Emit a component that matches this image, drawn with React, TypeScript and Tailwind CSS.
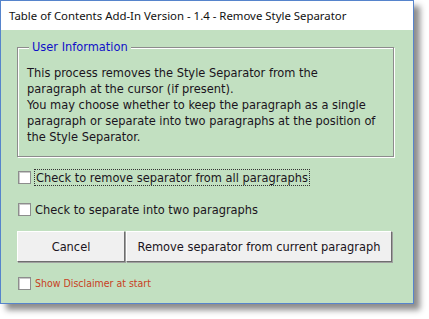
import React from "react";

function Box() {
  return (
    <span className="block h-[13px] w-[13px] shrink-0 border border-[#8d8d8d] bg-white shadow-[inset_1px_1px_0_#c8c8c8]" />
  );
}

const INFO_LINES = [
  "This process removes the Style Separator from the",
  "paragraph at the cursor (if present).",
  "You may choose whether to keep the paragraph as a single",
  "paragraph or separate into two paragraphs at the position of",
  "the Style Separator.",
];

export default function App() {
  const body = "font-['DejaVu_Sans_Condensed','DejaVu_Sans',sans-serif] text-[12.7px] text-[#1a1420]";
  return (
    <div className="h-[319px] w-[429px] bg-white">
      <div className="flex h-[304px] w-[414px] flex-col border border-[#5684cc] bg-[#c2e0c1] shadow-[6px_6px_6px_rgba(0,0,0,0.45)]">
        <div className="flex h-[29px] items-center bg-white pl-[8px] font-['Noto_Sans',sans-serif] text-[11.4px] text-[#111]">
          Table of Contents Add-In Version - 1.4 - Remove Style Separator
        </div>
        <div className={`flex flex-1 flex-col px-[16px] ${body}`}>
          <div className="relative mt-[17px] h-[110px] w-[377px] border border-[#8c8c8c] shadow-[1px_1px_0_#fff,inset_1px_1px_0_#fff]">
            <span className="absolute left-[11px] top-[-10px] bg-[#c2e0c1] px-[3px] leading-[18px] text-[#1010c8]">
              User Information
            </span>
            <div className="pl-[9px] pt-[17px] leading-[16px] whitespace-nowrap">
              {INFO_LINES.map((line) => (
                <p key={line}>{line}</p>
              ))}
            </div>
          </div>
          <label className="mt-[12px] flex items-center gap-[3px] pl-[1px]">
            <Box />
            <span className="border border-dotted border-[#333] px-[1px] leading-[15px]">
              Check to remove separator from all paragraphs
            </span>
          </label>
          <label className="mt-[16px] flex items-center gap-[4px] pl-[1px]">
            <Box />
            <span className="leading-[15px]">Check to separate into two paragraphs</span>
          </label>
          <div className="mt-[14px] flex gap-[1px]">
            <button className="h-[31px] w-[108px] border border-[#fff] border-r-[#6e6e6e] border-b-[#6e6e6e] bg-[#f0f0f0] shadow-[1px_1px_0_#a0a0a0]">
              Cancel
            </button>
            <button className="h-[31px] w-[266px] border border-[#fff] border-r-[#6e6e6e] border-b-[#6e6e6e] bg-[#f0f0f0] shadow-[1px_1px_0_#a0a0a0]">
              Remove separator from current paragraph
            </button>
          </div>
          <label className="mt-[14px] flex items-center gap-[4px] pl-[1px]">
            <Box />
            <span className="text-[10.5px] leading-[14px] text-[#c8401e]">Show Disclaimer at start</span>
          </label>
        </div>
      </div>
    </div>
  );
}
